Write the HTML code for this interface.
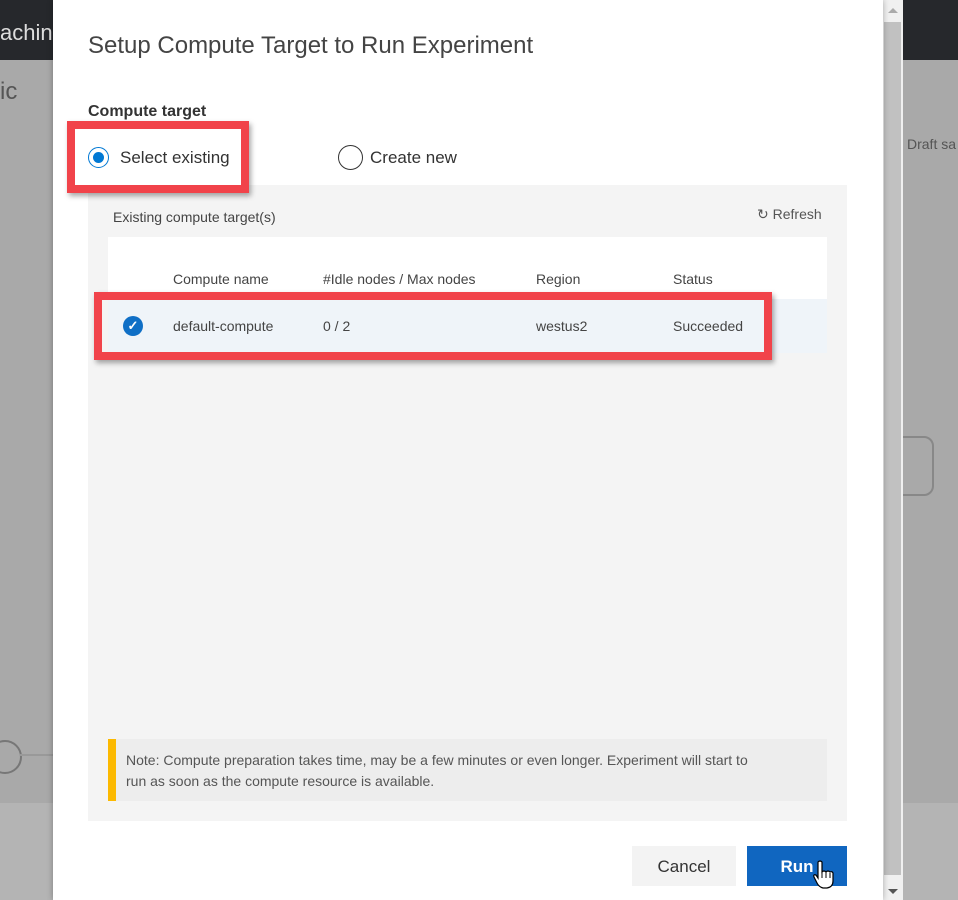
<!DOCTYPE html>
<html><head><meta charset="utf-8"><style>
body{margin:0;width:958px;height:900px;position:relative;overflow:hidden;background:#a9a9a9;font-family:"Segoe UI","Liberation Sans",sans-serif;}
.abs{position:absolute}
</style></head><body>
<div class="abs" style="left:0;top:0;width:958px;height:60px;background:#26282c"></div>
<div class="abs" style="left:0;top:803px;width:958px;height:97px;background:#b4b4b4"></div>
<div class="abs" style="left:0;top:20px;color:#ddd;font-size:22px">achine</div>
<div class="abs" style="left:0;top:78px;color:#555;font-size:24px">ic</div>
<div class="abs" style="left:907px;top:136px;color:#555;font-size:14px">Draft sa</div>
<div class="abs" style="left:890px;top:436px;width:44px;height:60px;border:2px solid #888;border-radius:10px;box-sizing:border-box"></div>
<div class="abs" style="left:-12px;top:740px;width:30px;height:30px;border:2px solid #777;border-radius:50%"></div>
<div class="abs" style="left:20px;top:754px;width:40px;height:2px;background:#999"></div>
<div class="abs" style="left:883px;top:0;width:20px;height:900px;background:#f0f0f0"></div>
<div class="abs" style="left:884px;top:22px;width:17px;height:853px;background:#c1c1c1"></div>
<div class="abs" style="left:888px;top:8px;width:0;height:0;border-left:5px solid transparent;border-right:5px solid transparent;border-bottom:5px solid #aaa"></div>
<div class="abs" style="left:888px;top:889px;width:0;height:0;border-left:5px solid transparent;border-right:5px solid transparent;border-top:5px solid #555"></div>
<div class="abs" style="left:53px;top:0;width:830px;height:900px;background:#fff;box-shadow:0 0 6px rgba(0,0,0,.3)"></div>
<div class="abs" style="left:88px;top:32px;font-size:24px;color:#444;font-weight:300">Setup Compute Target to Run Experiment</div>
<div class="abs" style="left:88px;top:103px;font-size:16px;color:#333;font-weight:bold">Compute target</div>
<div class="abs" style="left:88px;top:147px;width:21px;height:21px;border:1px solid #0078d4;border-radius:50%;box-sizing:border-box"></div>
<div class="abs" style="left:93px;top:152px;width:11px;height:11px;background:#0078d4;border-radius:50%"></div>
<div class="abs" style="left:120px;top:148px;font-size:17px;color:#333">Select existing</div>
<div class="abs" style="left:338px;top:145px;width:25px;height:25px;border:1px solid #333;border-radius:50%;box-sizing:border-box"></div>
<div class="abs" style="left:370px;top:148px;font-size:17px;color:#333">Create new</div>
<div class="abs" style="left:88px;top:185px;width:759px;height:636px;background:#f4f4f4"></div>
<div class="abs" style="left:113px;top:209px;font-size:14px;color:#444">Existing compute target(s)</div>
<div class="abs" style="left:757px;top:206px;font-size:14px;color:#555">↻ Refresh</div>
<div class="abs" style="left:108px;top:237px;width:719px;height:62px;background:#fff"></div>
<div class="abs" style="left:108px;top:299px;width:719px;height:54px;background:#eff4f9"></div>
<div class="abs" style="top:271px;font-size:14px;color:#444;left:173px">Compute name</div>
<div class="abs" style="top:271px;font-size:14px;color:#444;left:323px">#Idle nodes / Max nodes</div>
<div class="abs" style="top:271px;font-size:14px;color:#444;left:536px">Region</div>
<div class="abs" style="top:271px;font-size:14px;color:#444;left:673px">Status</div>
<div class="abs" style="left:123px;top:316px;width:20px;height:20px;border-radius:50%;background:#0f6fc6;color:#fff;font-size:13px;text-align:center;line-height:20px;font-weight:bold">✓</div>
<div class="abs" style="top:318px;font-size:14px;color:#444;left:173px">default-compute</div>
<div class="abs" style="top:318px;font-size:14px;color:#444;left:323px">0 / 2</div>
<div class="abs" style="top:318px;font-size:14px;color:#444;left:536px">westus2</div>
<div class="abs" style="top:318px;font-size:14px;color:#444;left:673px">Succeeded</div>
<div class="abs" style="left:108px;top:739px;width:719px;height:62px;background:#ededed"></div>
<div class="abs" style="left:108px;top:739px;width:8px;height:62px;background:#fcb900"></div>
<div class="abs" style="left:126px;top:750px;font-size:14px;color:#555;line-height:21px;width:630px">Note: Compute preparation takes time, may be a few minutes or even longer. Experiment will start to run as soon as the compute resource is available.</div>
<div class="abs" style="left:632px;top:846px;width:104px;height:40px;background:#f3f3f3;font-size:17px;color:#333;text-align:center;line-height:42px">Cancel</div>
<div class="abs" style="left:747px;top:846px;width:100px;height:40px;background:#1066c0;font-size:17px;color:#fff;text-align:center;line-height:42px;font-weight:bold">Run</div>
<svg class="abs" style="left:812px;top:860px" width="24" height="30" viewBox="0 0 24 30"><path d="M6 2 Q8 0 10 2 V12 Q12 10 14 12 Q16 10 18 12 Q20 11 21 13 V21 Q21 27 15 28 H11 Q7 27 5 23 L2 17 Q1 14 4 15 L6 18 Z" fill="#fff" stroke="#000" stroke-width="1.2"/><path d="M10 12 V18 M14 12 V18 M18 13 V18" stroke="#000" stroke-width="1"/></svg>
<div class="abs" style="left:67px;top:121px;width:182px;height:72px;border:8px solid #f1434a;box-sizing:border-box;box-shadow:2px 3px 5px rgba(0,0,0,.35)"></div>
<div class="abs" style="left:94px;top:292px;width:678px;height:68px;border:8px solid #f1434a;box-sizing:border-box;box-shadow:2px 3px 5px rgba(0,0,0,.35)"></div>
</body></html>
